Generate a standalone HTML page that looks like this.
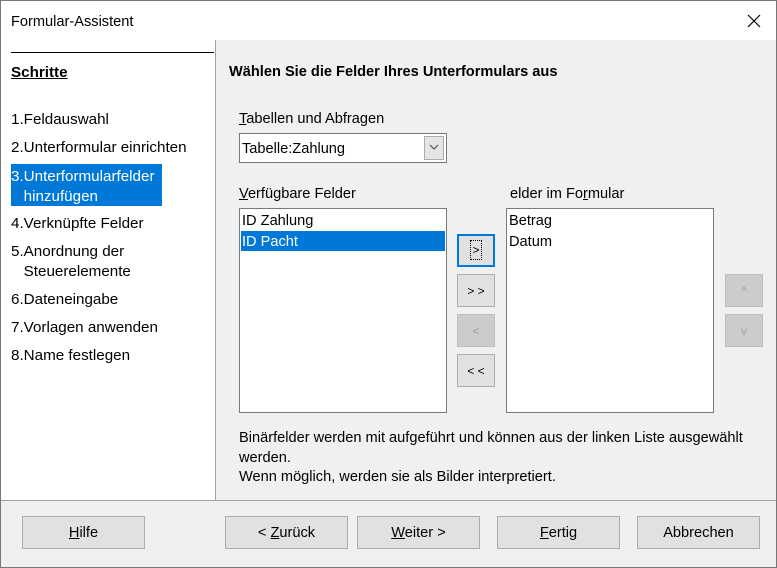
<!DOCTYPE html>
<html><head><style>
*{margin:0;padding:0;box-sizing:border-box}
body{width:777px;height:568px;background:#f0f0f0;font-family:"Liberation Sans",sans-serif;font-size:14.6px;color:#000;position:relative;overflow:hidden}
.a{position:absolute}
.l{font-size:15.2px}
.t{margin-top:2px}
.btn{position:absolute;background:#e1e1e1;border:1px solid #adadad;text-align:center;line-height:32px}
.dis{background:#cccccc;border:1px solid #bfbfbf;color:#a0a0a0}
u{text-decoration:underline}
</style></head><body>
<div class="a" style="left:0;top:0;width:777px;height:568px;border:1px solid #777"></div>
<div class="a" style="left:1px;top:1px;width:775px;height:39px;background:#fff"></div>
<div class="a" style="left:11px;top:14px;font-size:14.6px">Formular-Assistent</div>
<svg class="a" style="left:747px;top:14px" width="14" height="14"><path d="M1 1L13 13M13 1L1 13" stroke="#000" stroke-width="1.2"/></svg>
<div class="a" style="left:1px;top:40px;width:214px;height:461px;background:#fff"></div>
<div class="a" style="left:215px;top:40px;width:1px;height:461px;background:#a0a0a0"></div>
<div class="a" style="left:11px;top:52px;width:203px;height:1px;background:#000"></div>
<div class="a l t" style="left:11px;top:62px;font-weight:bold"><u>Schritte</u></div>
<div class="a l t" style="left:11px;top:109px">1.Feldauswahl</div>
<div class="a l t" style="left:11px;top:137px">2.Unterformular einrichten</div>
<div class="a" style="left:11px;top:164px;width:151px;height:42px;background:#0078d7"></div>
<div class="a l t" style="left:11px;top:165px;color:#fff;line-height:20px">3.Unterformularfelder<br>&nbsp;&nbsp;&nbsp;hinzufügen</div>
<div class="a l t" style="left:11px;top:213px">4.Verknüpfte Felder</div>
<div class="a l t" style="left:11px;top:240px;line-height:20px">5.Anordnung der<br>&nbsp;&nbsp;&nbsp;Steuerelemente</div>
<div class="a l t" style="left:11px;top:289px">6.Dateneingabe</div>
<div class="a l t" style="left:11px;top:317px">7.Vorlagen anwenden</div>
<div class="a l t" style="left:11px;top:345px">8.Name festlegen</div>

<div class="a t" style="left:229px;top:62px;font-weight:bold">Wählen Sie die Felder Ihres Unterformulars aus</div>
<div class="a t" style="left:239px;top:109px"><u>T</u>abellen und Abfragen</div>
<div class="a" style="left:239px;top:133px;width:208px;height:30px;background:#fff;border:1px solid #7a7a7a"></div>
<div class="a t" style="left:242px;top:139px">Tabelle:Zahlung</div>
<div class="a" style="left:424px;top:136px;width:20px;height:24px;background:#e5e5e5;border:1px solid #adadad"></div>
<svg class="a" style="left:429px;top:144px" width="10" height="7"><path d="M1 1L5 5L9 1" stroke="#444" fill="none"/></svg>
<div class="a t" style="left:239px;top:184px"><u>V</u>erfügbare Felder</div>
<div class="a" style="left:239px;top:208px;width:208px;height:205px;background:#fff;border:1px solid #7a7a7a"></div>
<div class="a t" style="left:242px;top:211px">ID Zahlung</div>
<div class="a" style="left:241px;top:231px;width:204px;height:20px;background:#0078d7"></div>
<div class="a t" style="left:242px;top:232px;color:#fff">ID Pacht</div>
<div class="a t" style="left:510px;top:184px">elder im Fo<u>r</u>mular</div>
<div class="a" style="left:506px;top:208px;width:208px;height:205px;background:#fff;border:1px solid #7a7a7a"></div>
<div class="a t" style="left:509px;top:211px">Betrag</div>
<div class="a t" style="left:509px;top:232px">Datum</div>

<div class="btn" style="left:457px;top:234px;width:38px;height:33px;border:2px solid #0078d7;line-height:29px;font-size:12px"><span style="border:1px dotted #000;padding:2px 1px">&gt;</span></div>
<div class="btn" style="left:457px;top:274px;width:38px;height:33px;font-size:12px">&gt; &gt;</div>
<div class="btn dis" style="left:457px;top:314px;width:38px;height:33px;font-size:12px">&lt;</div>
<div class="btn" style="left:457px;top:354px;width:38px;height:33px;font-size:12px">&lt; &lt;</div>
<div class="btn dis" style="left:725px;top:274px;width:38px;height:33px;font-size:12px">^</div>
<div class="btn dis" style="left:725px;top:314px;width:38px;height:33px;font-size:12px">v</div>

<div class="a t" style="left:239px;top:427px;line-height:19.5px">Binärfelder werden mit aufgeführt und können aus der linken Liste ausgewählt<br>werden.<br>Wenn möglich, werden sie als Bilder interpretiert.</div>

<div class="a" style="left:1px;top:500px;width:775px;height:1px;background:#a0a0a0"></div>
<div class="btn" style="left:22px;top:516px;width:123px;height:33px"><u>H</u>ilfe</div>
<div class="btn" style="left:225px;top:516px;width:123px;height:33px">&lt; <u>Z</u>urück</div>
<div class="btn" style="left:357px;top:516px;width:123px;height:33px"><u>W</u>eiter &gt;</div>
<div class="btn" style="left:497px;top:516px;width:123px;height:33px"><u>F</u>ertig</div>
<div class="btn" style="left:637px;top:516px;width:123px;height:33px">Abbrechen</div>
</body></html>
